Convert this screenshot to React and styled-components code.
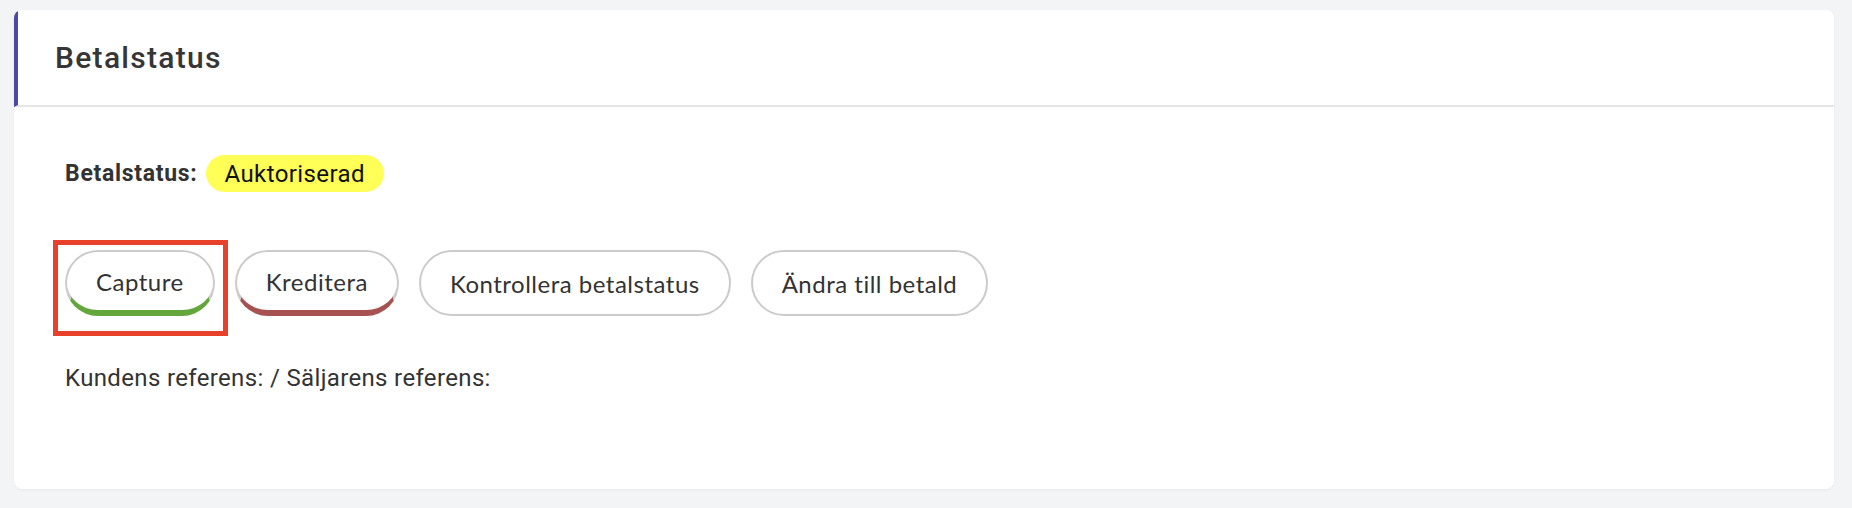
import React from "react";
import styled, { createGlobalStyle } from "styled-components";

const GlobalStyle = createGlobalStyle`
  html, body {
    margin: 0;
    padding: 0;
    background-color: #f3f4f6;
    font-family: Roboto, "Liberation Sans", sans-serif;
  }
`;

const Page = styled("div")`
  padding: 10px 18px 19px 14px;
`;

const Card = styled("section")`
  background-color: #ffffff;
  border-radius: 8px;
  box-shadow: 0 1px 3px rgba(0, 0, 0, 0.05);
  height: 479px;
  overflow: hidden;
`;

const Header = styled("div")`
  display: flex;
  align-items: center;
  height: 95px;
  padding-left: 37px;
  border-left: 4px solid #4a4aa6;
  border-bottom: 2px solid #e6e6e8;
`;

const Title = styled("h2")`
  margin: 0;
  font-size: 30px;
  font-weight: 500;
  letter-spacing: 1.3px;
  color: #363636;
`;

const Body = styled("div")`
  padding: 48px 51px 0;
`;

const StatusRow = styled("div")`
  display: flex;
  align-items: center;
  gap: 8px;
`;

const Label = styled("span")`
  font-size: 23px;
  font-weight: 700;
  letter-spacing: 0.7px;
  color: #333333;
`;

const Badge = styled("span")`
  display: inline-flex;
  align-items: center;
  height: 37px;
  padding: 0 19px;
  border-radius: 19px;
  background-color: #ffff57;
  color: #111111;
  font-size: 24px;
  letter-spacing: 0.4px;
`;

const Actions = styled("div")`
  display: flex;
  gap: 20px;
  margin-top: 58px;
`;

const Marked = styled("div")`
  position: relative;
  display: flex;
`;

const Highlight = styled("span")`
  position: absolute;
  top: -10px;
  left: -12px;
  right: -13px;
  bottom: -20px;
  border: 5px solid #e8412b;
  pointer-events: none;
`;

const ActionButton = styled("button")`
  height: 66px;
  padding: 0 29px;
  border: 2px solid #cbcbcb;
  border-bottom: ${({ $accent }) => ($accent ? `6px solid ${$accent}` : "2px solid #cbcbcb")};
  border-radius: 33px;
  background-color: #ffffff;
  color: #333333;
  font-family: Lato, "Open Sans", sans-serif;
  font-size: 24px;
  letter-spacing: 0.5px;
  cursor: pointer;
`;

const References = styled("p")`
  margin: 48px 0 0;
  font-size: 24px;
  line-height: 28px;
  letter-spacing: 0.35px;
  color: #333333;
`;

const App = () => (
  <>
    <GlobalStyle />
    <Page>
      <Card>
        <Header>
          <Title>Betalstatus</Title>
        </Header>
        <Body>
          <StatusRow>
            <Label>Betalstatus:</Label>
            <Badge>Auktoriserad</Badge>
          </StatusRow>
          <Actions>
            <Marked>
              <ActionButton $accent="#63a63b">Capture</ActionButton>
              <Highlight />
            </Marked>
            <ActionButton $accent="#a65250">Kreditera</ActionButton>
            <ActionButton>Kontrollera betalstatus</ActionButton>
            <ActionButton>Ändra till betald</ActionButton>
          </Actions>
          <References>Kundens referens: / Säljarens referens:</References>
        </Body>
      </Card>
    </Page>
  </>
);

export default App;
